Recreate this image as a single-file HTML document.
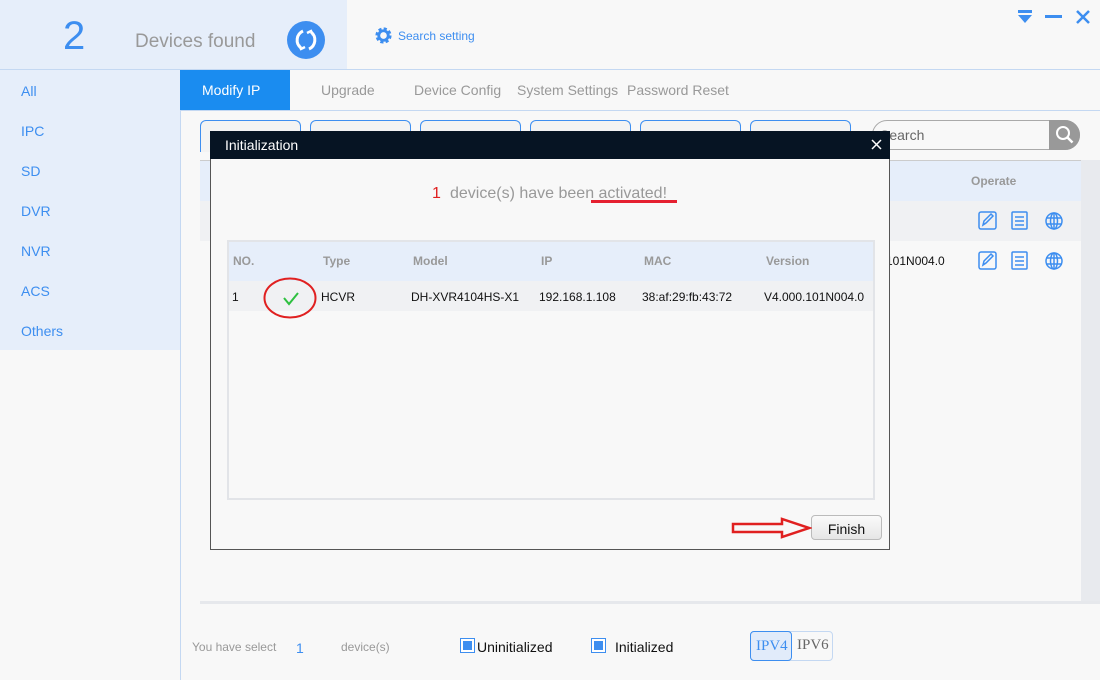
<!DOCTYPE html>
<html><head><meta charset="utf-8"><style>
*{margin:0;padding:0;box-sizing:border-box}
body{width:1100px;height:680px;position:relative;overflow:hidden;background:#f8f8f8;font-family:"Liberation Sans",Arial,sans-serif;font-size:14px}
.a{position:absolute}
.side div{position:absolute;left:21px;color:#3d8ef0;font-size:14px}
.btn{position:absolute;top:120px;height:32px;width:101px;border:1.5px solid #3d8ef0;border-bottom:none;border-radius:6px 6px 0 0;background:#f3f3f3}
.th{position:absolute;color:#999;font-weight:bold;font-size:12px}
.td{position:absolute;color:#111;font-size:12px}
</style></head><body>
<div class="a" style="left:0;top:0;width:347px;height:69px;background:#e6eefa"></div>
<div class="a" style="left:0;top:69px;width:1100px;height:1px;background:#c4d8f2"></div>
<div class="a" style="left:63px;top:14px;font-size:40px;color:#3d8ef0">2</div>
<div class="a" style="left:135px;top:31px;font-size:19px;color:#999">Devices found</div>
<svg class="a" style="left:286px;top:20px" width="40" height="40" viewBox="0 0 40 40"><circle cx="20" cy="20" r="19" fill="#3d8ef0"/><path d="M17 11 A10 10 0 0 0 15 28" stroke="#fff" stroke-width="3" fill="none"/><path d="M23 29 A10 10 0 0 0 25 12" stroke="#fff" stroke-width="3" fill="none"/><path d="M13 25 L15 29 L19 27" stroke="#fff" stroke-width="2.5" fill="none"/><path d="M27 15 L25 11 L21 13" stroke="#fff" stroke-width="2.5" fill="none"/></svg>
<svg class="a" style="left:374px;top:26px" width="19" height="19" viewBox="0 0 20 20"><circle cx="10" cy="10" r="6.5" fill="none" stroke="#3d8ef0" stroke-width="4" stroke-dasharray="3 2.1"/><circle cx="10" cy="10" r="5" fill="none" stroke="#3d8ef0" stroke-width="3"/></svg>
<div class="a" style="left:398px;top:29px;font-size:12px;color:#3d8ef0">Search setting</div>
<svg class="a" style="left:1016px;top:9px" width="84" height="16"><path d="M2 1h14v3H2z M2 6h14l-7 8z" fill="#3d8ef0"/><rect x="29" y="6" width="17" height="3" fill="#3d8ef0"/><path d="M61 2l12 12M73 2L61 14" stroke="#3d8ef0" stroke-width="2.5"/></svg>
<div class="a side" style="left:0;top:70px;width:180px;height:280px;background:#e6eefa">
<div style="top:13px">All</div><div style="top:53px">IPC</div><div style="top:93px">SD</div><div style="top:133px">DVR</div><div style="top:173px">NVR</div><div style="top:213px">ACS</div><div style="top:253px">Others</div></div>
<div class="a" style="left:180px;top:70px;width:1px;height:610px;background:#c4d8f2"></div>
<div class="a" style="left:180px;top:70px;width:110px;height:40px;background:#1a8cf0;color:#fff;padding:12px 0 0 22px">Modify IP</div>
<div class="a" style="left:321px;top:82px;color:#999">Upgrade</div>
<div class="a" style="left:414px;top:82px;color:#999">Device Config</div>
<div class="a" style="left:517px;top:82px;color:#999">System Settings</div>
<div class="a" style="left:627px;top:82px;color:#999">Password Reset</div>
<div class="a" style="left:181px;top:110px;width:919px;height:1px;background:#c4d8f2"></div>
<div class="btn" style="left:200px"></div><div class="btn" style="left:310px"></div><div class="btn" style="left:420px"></div><div class="btn" style="left:530px"></div><div class="btn" style="left:640px"></div><div class="btn" style="left:750px"></div>
<div class="a" style="left:872px;top:120px;width:208px;height:30px;border:1px solid #aaa;border-radius:15px;background:#f8f8f8;padding:6px 0 0 7px;color:#666">Search</div>
<div class="a" style="left:1049px;top:120px;width:31px;height:30px;background:#999;border-radius:0 15px 15px 0"></div>
<svg class="a" style="left:1054px;top:124px" width="22" height="22"><circle cx="9" cy="9" r="6" stroke="#fff" stroke-width="2" fill="none"/><path d="M13.5 13.5l5 5" stroke="#fff" stroke-width="2.5"/></svg>
<div class="a" style="left:200px;top:160px;width:881px;height:41px;background:#e6eefa;border-top:1px solid #ccc"></div>
<div class="a" style="left:200px;top:201px;width:881px;height:40px;background:#f0f1f3"></div>
<div class="a" style="left:1081px;top:160px;width:19px;height:443px;background:#e8eaee"></div>
<div class="a" style="left:200px;top:601px;width:900px;height:3px;background:#e6e8ec"></div>
<div class="th" style="left:971px;top:174px">Operate</div>
<div class="td" style="left:879px;top:214px">.0</div>
<div class="td" style="left:876px;top:254px">0.101N004.0</div>
<svg class="a" style="left:978px;top:211px" width="90" height="60" viewBox="0 0 90 60" fill="none" stroke="#3d8ef0" stroke-width="1.5"><g id="ic"><rect x="1" y="1" width="17" height="17" rx="2"/><path d="M5 14l1-4 7-7 2 2-7 7z"/><rect x="34" y="1" width="15" height="17" rx="1"/><path d="M37 6h9M37 10h9M37 14h9"/><circle cx="76" cy="10" r="8"/><ellipse cx="76" cy="10" rx="3.5" ry="8"/><path d="M68 7h16M68 13h16M76 2v16"/></g><use href="#ic" y="40"/></svg>
<div class="a" style="left:192px;top:640px;font-size:12px;color:#999">You have select</div>
<div class="a" style="left:296px;top:640px;font-size:14px;color:#3d8ef0">1</div>
<div class="a" style="left:341px;top:640px;font-size:12px;color:#999">device(s)</div>
<div class="a" style="left:460px;top:638px;width:15px;height:15px;border:1px solid #3d8ef0;background:#3d8ef0;box-shadow:inset 0 0 0 2px #fff"></div>
<div class="a" style="left:477px;top:639px;color:#111">Uninitialized</div>
<div class="a" style="left:591px;top:638px;width:15px;height:15px;border:1px solid #3d8ef0;background:#3d8ef0;box-shadow:inset 0 0 0 2px #fff"></div>
<div class="a" style="left:615px;top:639px;color:#111">Initialized</div>
<div class="a" style="left:750px;top:631px;width:83px;height:30px;border:1px solid #c4d8f2;border-radius:4px"></div>
<div class="a" style="left:750px;top:631px;width:42px;height:30px;border:1px solid #3d8ef0;border-radius:4px;background:#e1ebfa;color:#3d8ef0;font-family:'Liberation Serif',serif;font-size:15px;padding:6px 0 0 5px">IPV4</div>
<div class="a" style="left:797px;top:637px;color:#666;font-family:'Liberation Serif',serif;font-size:15px">IPV6</div>
<div class="a" style="left:210px;top:131px;width:680px;height:419px;background:#f8f8f8;border:1px solid #555"></div>
<div class="a" style="left:210px;top:131px;width:680px;height:28px;background:#061423;color:#fff;padding:6px 0 0 15px">Initialization</div>
<svg class="a" style="left:871px;top:139px" width="11" height="11"><path d="M1 1l9 9M10 1l-9 9" stroke="#fff" stroke-width="1.5"/></svg>
<div class="a" style="left:432px;top:185px;font-size:16px;color:#e02020">1</div>
<div class="a" style="left:450px;top:185px;font-size:16px;color:#999">device(s) have been activated!</div>
<div class="a" style="left:591px;top:200px;width:86px;height:3px;background:#e52030"></div>
<div class="a" style="left:227px;top:240px;width:648px;height:260px;border:2px solid #e2e4e8;background:#f8f8f8"></div>
<div class="a" style="left:229px;top:242px;width:644px;height:39px;background:#e6eefa"></div>
<div class="a" style="left:229px;top:281px;width:644px;height:30px;background:#f0f1f3"></div>
<div class="th" style="left:233px;top:254px">NO.</div><div class="th" style="left:323px;top:254px">Type</div><div class="th" style="left:413px;top:254px">Model</div><div class="th" style="left:541px;top:254px">IP</div><div class="th" style="left:644px;top:254px">MAC</div><div class="th" style="left:766px;top:254px">Version</div>
<div class="td" style="left:232px;top:290px">1</div><div class="td" style="left:321px;top:290px">HCVR</div><div class="td" style="left:411px;top:290px">DH-XVR4104HS-X1</div><div class="td" style="left:539px;top:290px">192.168.1.108</div><div class="td" style="left:642px;top:290px">38:af:29:fb:43:72</div><div class="td" style="left:764px;top:290px">V4.000.101N004.0</div>
<svg class="a" style="left:262px;top:276px" width="56" height="46"><ellipse cx="28" cy="22" rx="25.5" ry="19.5" stroke="#e02020" stroke-width="2" fill="none"/><path d="M22 22l5 6 9-11" stroke="#2ec040" stroke-width="2" fill="none"/></svg>
<div class="a" style="left:811px;top:515px;width:71px;height:25px;border:1px solid #bbb;border-radius:4px;background:linear-gradient(#fafafa,#e6e6e6);color:#111;text-align:center;padding-top:5px">Finish</div>
<svg class="a" style="left:730px;top:517px" width="82" height="22"><path d="M3 7h49V2l27 9-27 9v-5H3z" fill="none" stroke="#e02020" stroke-width="2.5"/></svg>
</body></html>
